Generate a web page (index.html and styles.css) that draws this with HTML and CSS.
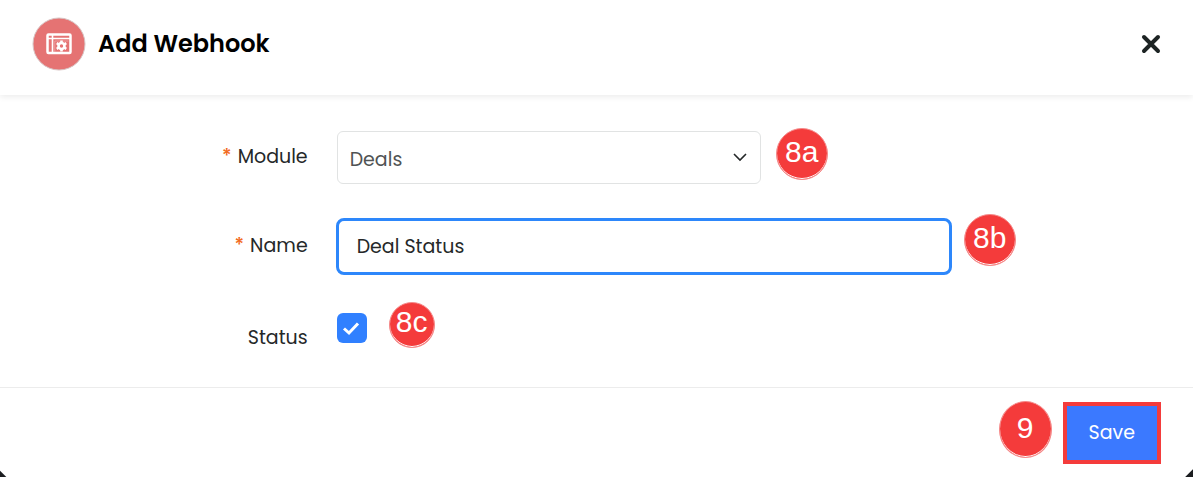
FILE: index.html
```html
<!DOCTYPE html>
<html lang="en">
<head>
<meta charset="utf-8">
<meta name="viewport" content="width=device-width, initial-scale=1">
<title>Add Webhook</title>
<link rel="stylesheet" href="styles.css">
</head>
<body>
<form class="dialog">
  <header class="dialog-header">
    <svg class="logo" viewBox="0 0 54 54" aria-hidden="true">
      <circle cx="27" cy="27" r="26" fill="#e57373" stroke="#d8c4c4" stroke-width="1"/>
      <rect x="15.500" y="17.500" width="23" height="18.500" rx="1" fill="none" stroke="#fff" stroke-width="2.500"/>
      <path d="M15 21.500H39M20.500 17V36" fill="none" stroke="#fff" stroke-width="1.600"/>
      <path d="M22.800 35V24H36.500" fill="none" stroke="#f4bcbc" stroke-width="0.600"/>
      <circle cx="29.500" cy="29" r="3" fill="none" stroke="#fff" stroke-width="2.600"/>
      <path d="M29.500 23.500V26M29.500 32V34.500M24.700 26.200L26.900 27.500M32.100 30.500L34.300 31.800M24.700 31.800L26.900 30.500M32.100 27.500L34.300 26.200" stroke="#fff" stroke-width="2.600"/>
    </svg>
    <h1 class="title">Add Webhook</h1>
    <button class="close" type="button" aria-label="Close">
      <svg viewBox="0 0 20 20" width="20" height="20"><path d="M3 3L17 17M17 3L3 17" stroke="#1d2424" stroke-width="4" stroke-linecap="round"/></svg>
    </button>
  </header>
  <main class="fields">
    <div class="row">
      <label class="label" for="module"><span class="required">*</span> Module</label>
      <div class="control">
        <select class="select" id="module"><option>Deals</option></select>
        <span class="badge">8a</span>
      </div>
    </div>
    <div class="row">
      <label class="label" for="name"><span class="required">*</span> Name</label>
      <div class="control">
        <input class="input" id="name" type="text" value="Deal Status">
        <span class="badge badge-raised">8b</span>
      </div>
    </div>
    <div class="row row-status">
      <label class="label label-status" for="status">Status</label>
      <div class="control control-status">
        <span class="check">
          <input class="checkbox" id="status" type="checkbox" checked>
          <svg class="tick" viewBox="0 0 30 30" aria-hidden="true"><path d="M7 15.500L12 20L21 10.500" fill="none" stroke="#fff" stroke-width="3"/></svg>
        </span>
        <span class="badge badge-small">8c</span>
      </div>
    </div>
  </main>
  <footer class="dialog-footer">
    <span class="badge badge-tall">9</span>
    <button class="save" type="submit">Save</button>
  </footer>
</form>
</body>
</html>
```
FILE: styles.css
```css
* { box-sizing: border-box; }

body {
  margin: 0;
  color: #252829;
  font: 19px/28px Poppins, Inter, sans-serif;
}

.dialog {
  display: flex;
  flex-direction: column;
  min-height: 100vh;
  background: #fff;
}

.dialog-header {
  display: flex;
  align-items: center;
  gap: 12px;
  padding: 17px 32px 24px;
  box-shadow: 0 2px 6px rgba(0, 0, 0, 0.08);
}

.logo { width: 54px; height: 54px; }

.title {
  flex: 1;
  margin: 0;
  color: #000;
  font-size: 24px;
  font-weight: 600;
  line-height: 36px;
}

.close {
  display: flex;
  padding: 0;
  border: 0;
  background: none;
}

.fields {
  display: flex;
  flex: 1;
  flex-direction: column;
  gap: 28px;
  padding: 33px 32px 32px 0;
}

.row {
  display: grid;
  grid-template-columns: 26.5% 1fr;
  align-items: center;
  gap: 28px;
}

.row-status { margin-top: -4px; }

.label { text-align: right; }

.label-status { padding-top: 20px; }

.required {
  margin-right: 1px;
  color: #f26a21;
  font-weight: 500;
}

.control {
  display: flex;
  align-items: center;
  gap: 12px;
}

.control-status { gap: 22px; }

.select {
  width: 52%;
  max-width: 424px;
  height: 53px;
  margin: 0 3px 0 1px;
  padding: 6px 12px 0;
  appearance: none;
  border: 1px solid #e1e3e3;
  border-radius: 6px;
  background: #fff url("data:image/svg+xml,%3Csvg xmlns='http://www.w3.org/2000/svg' viewBox='0 0 14 9'%3E%3Cpath d='M1 1l6 6 6-6' fill='none' stroke='%23252829' stroke-width='1.6'/%3E%3C/svg%3E") no-repeat right 13px center / 14px 9px;
  color: #505354;
  font: inherit;
}

.input {
  width: 75%;
  max-width: 616px;
  height: 57px;
  padding: 0 18px;
  border: 3px solid #2d87fb;
  border-radius: 8px;
  outline: 0;
  background: #fff;
  color: inherit;
  font: inherit;
}

.check {
  display: grid;
  margin-left: 1px;
}

.checkbox {
  grid-area: 1 / 1;
  width: 30px;
  height: 30px;
  margin: 0;
  appearance: none;
  border-radius: 6px;
  background: #3080ff;
}

.tick {
  grid-area: 1 / 1;
  width: 30px;
  height: 30px;
  pointer-events: none;
}

.badge {
  display: flex;
  align-items: center;
  justify-content: center;
  width: 52px;
  height: 52px;
  margin-bottom: 6px;
  padding-bottom: 4px;
  border: 1px solid #f58a8a;
  border-radius: 50%;
  background: #f43b3b;
  box-shadow: inset 0 -1px 0 #fff;
  color: #fff;
  font: 30px/32px "Liberation Sans", sans-serif;
}

.badge-raised { margin-bottom: 12px; }

.badge-small {
  width: 46px;
  height: 46px;
  padding-bottom: 6px;
}

.badge-tall {
  width: 53px;
  height: 57px;
  padding-bottom: 4px;
}

.dialog-footer {
  display: flex;
  align-items: center;
  justify-content: flex-end;
  gap: 11px;
  padding: 13px 32px;
  border-top: 1px solid #ececec;
  background:
    linear-gradient(45deg, #1b1d20 4px, transparent 5px),
    linear-gradient(-45deg, #1b1d20 5px, transparent 6px);
}

.save {
  height: 62px;
  padding: 0 22px;
  border: 4px solid #f43b3b;
  background: #3b79ff;
  color: #fff;
  font: inherit;
}
```
